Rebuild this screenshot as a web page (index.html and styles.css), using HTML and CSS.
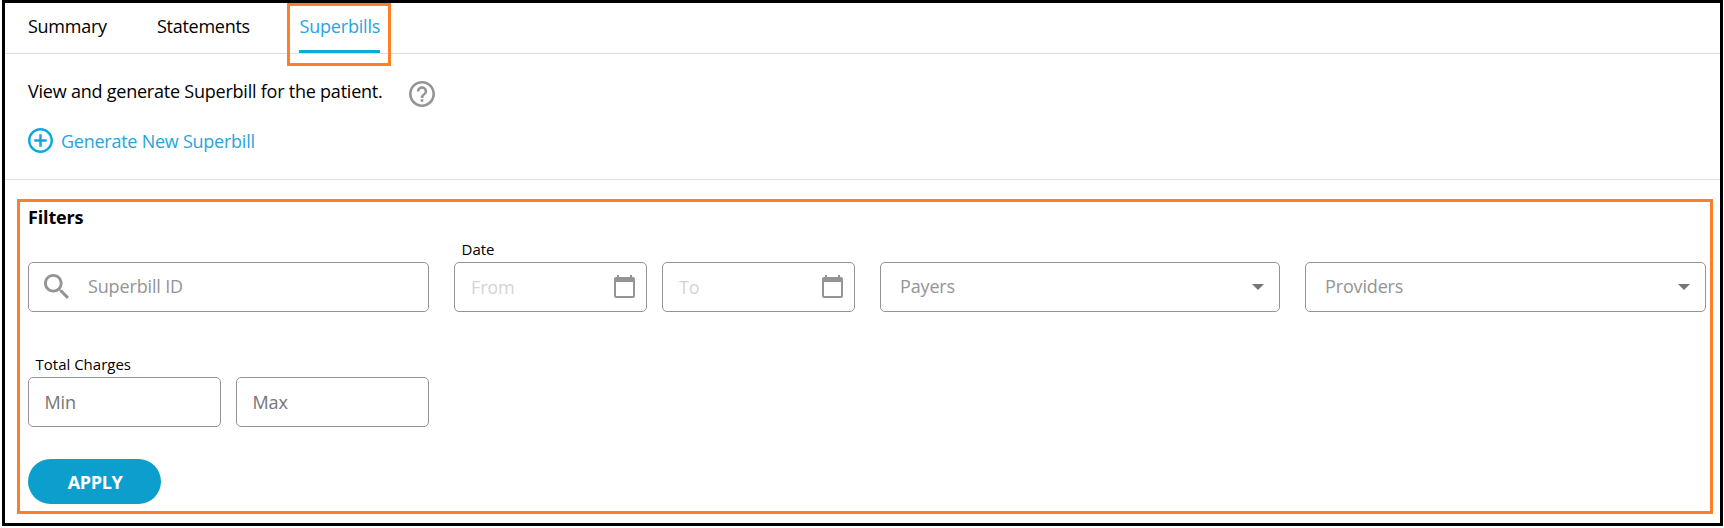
FILE: index.html
```html
<!DOCTYPE html>
<html lang="en">
<head>
<meta charset="utf-8">
<title>Superbills</title>
<link rel="stylesheet" href="styles.css">
</head>
<body>
<main class="frame">
  <nav class="tabs">
    <a class="tab">Summary</a>
    <a class="tab">Statements</a>
    <a class="tab tab-active"><span class="tab-label">Superbills</span></a>
  </nav>
  <section class="intro">
    <div class="intro-row">
      <span class="intro-text">View and generate Superbill for the patient.</span>
      <svg class="help" viewBox="2 2 20 20"><path d="M11 18h2v-2h-2v2zm1-16C6.48 2 2 6.48 2 12s4.480 10 10 10 10-4.480 10-10S17.520 2 12 2zm0 18c-4.410 0-8-3.590-8-8s3.590-8 8-8 8 3.590 8 8-3.590 8-8 8zm0-14c-2.210 0-4 1.790-4 4h2c0-1.100.9-2 2-2s2 .9 2 2c0 2-3 1.750-3 5h2c0-2.250 3-2.500 3-5 0-2.210-1.790-4-4-4z"/></svg>
    </div>
    <a class="generate">
      <svg class="plus" viewBox="2 2 20 20"><path d="M13 7h-2v4H7v2h4v4h2v-4h4v-2h-4V7zm-1-5C6.480 2 2 6.480 2 12s4.480 10 10 10 10-4.480 10-10S17.520 2 12 2zm0 18c-4.410 0-8-3.590-8-8s3.590-8 8-8 8 3.590 8 8-3.590 8-8 8z"/></svg>
      <span class="generate-text">Generate New Superbill</span>
    </a>
  </section>
  <section class="filters">
    <h2 class="title">Filters</h2>
    <div class="grid">
      <div class="cell">
        <div class="label"></div>
        <div class="field search">
          <svg class="search-icon" viewBox="3 3 17.490 17.490"><path d="M15.500 14h-.79l-.28-.27C15.410 12.590 16 11.110 16 9.500 16 5.910 13.090 3 9.500 3S3 5.910 3 9.500 5.910 16 9.500 16c1.610 0 3.090-.59 4.230-1.570l.27.28v.79l5 4.990L20.490 19l-4.990-5zm-6 0C7.010 14 5 11.990 5 9.500S7.010 5 9.500 5 14 7.010 14 9.500 11.990 14 9.500 14z"/></svg>
          <span class="hint">Superbill ID</span>
        </div>
      </div>
      <div class="cell">
        <div class="label">Date</div>
        <div class="pair">
          <div class="field date"><span class="hint faint">From</span>
            <svg class="cal" viewBox="0 0 21 23"><path d="M3 0h2v2h11V0h2v2h1a2 2 0 0 1 2 2v17a2 2 0 0 1-2 2H2a2 2 0 0 1-2-2V4a2 2 0 0 1 2-2h1zM2 7v14h17V7z"/></svg></div>
          <div class="field date"><span class="hint faint">To</span>
            <svg class="cal" viewBox="0 0 21 23"><path d="M3 0h2v2h11V0h2v2h1a2 2 0 0 1 2 2v17a2 2 0 0 1-2 2H2a2 2 0 0 1-2-2V4a2 2 0 0 1 2-2h1zM2 7v14h17V7z"/></svg></div>
        </div>
      </div>
      <div class="cell">
        <div class="label"></div>
        <div class="field select"><span class="hint">Payers</span><svg class="arrow" viewBox="0 0 12 6"><path d="M0 0h12L6 6z"/></svg></div>
      </div>
      <div class="cell">
        <div class="label"></div>
        <div class="field select"><span class="hint">Providers</span><svg class="arrow" viewBox="0 0 12 6"><path d="M0 0h12L6 6z"/></svg></div>
      </div>
      <div class="cell">
        <div class="label">Total Charges</div>
        <div class="pair">
          <div class="field amount"><span class="hint dark">Min</span></div>
          <div class="field amount"><span class="hint dark">Max</span></div>
        </div>
      </div>
    </div>
    <button class="apply">APPLY</button>
  </section>
</main>
</body>
</html>
```
FILE: styles.css
```css
* { box-sizing: border-box; }
body {
  margin: 0;
  height: 528px;
  background: #fff;
  color: #000;
  font: 18px/24px "Open Sans", sans-serif;
}
svg { display: block; flex: none; fill: #949494; }
.frame {
  width: 1721px;
  height: 526px;
  margin-left: 2px;
  border: 3px solid #000;
}
.tabs {
  display: flex;
  height: 51px;
  padding-left: 23px;
  border-bottom: 1px solid #dedede;
}
.tab { width: 129px; padding-top: 11px; letter-spacing: -0.27px; }
.tab:nth-child(2) { width: 130px; }
.tab-active {
  width: 104px;
  height: 63px;
  padding: 8px 8px 0 9px;
  border: 3px solid #ff7f27;
  color: #29a3dc;
  letter-spacing: -0.2px;
}
.tab-label {
  display: block;
  width: 81px;
  height: 39px;
  padding-left: 0.5px;
  border-bottom: 3px solid #0ca9dd;
}
.intro {
  height: 126px;
  padding: 22px 23px 0;
  border-bottom: 1px solid #dedede;
}
.intro-row { display: flex; height: 52px; }
.intro-text { width: 381px; padding-top: 3px; white-space: nowrap; letter-spacing: -0.225px; }
.help { width: 26px; height: 26px; margin-top: 5px; }
.generate { display: flex; align-items: center; color: #29a3dc; letter-spacing: -0.25px; }
.plus { width: 25px; height: 25px; margin-right: 8px; fill: #0ca9dd; }
.filters {
  width: 1696px;
  height: 315px;
  margin: 19px 0 0 12px;
  padding: 3px 4px 0 8px;
  border: 3px solid #ff7f27;
}
.title { margin: 0; font-size: 18px; line-height: 24px; font-weight: 700; letter-spacing: -0.15px; }
.grid {
  display: grid;
  grid-template-columns: 401px 401px 400px 401px;
  column-gap: 25px;
  row-gap: 42px;
  margin-top: 10px;
}
.label { height: 23px; padding-left: 7.5px; font-size: 15px; line-height: 20px; }
.pair { display: flex; gap: 15px; }
.field {
  display: flex;
  align-items: center;
  height: 50px;
  border: 1px solid #949494;
  border-radius: 5px;
}
.hint { color: #949494; letter-spacing: -0.15px; }
.search .hint, .select .hint { padding-bottom: 2px; }
.faint { color: #d4d4d4; }
.dark { color: #757575; }
.search { padding-left: 15px; }
.search-icon { width: 25px; height: 25px; margin: -1px 19px 0 0; }
.date, .amount { width: 193px; }
.date { justify-content: space-between; padding: 0 11px 0 16px; }
.amount { padding-left: 15.5px; }
.cal { width: 21px; height: 23px; margin-top: -1px; }
.select { justify-content: space-between; padding: 0 15px 0 19px; }
.arrow { width: 12px; height: 6px; fill: #757575; }
.apply {
  display: block;
  width: 133px;
  height: 45px;
  margin-top: 32px;
  padding: 0 0 0 1px;
  border: 0;
  border-radius: 23px;
  background: #0c9fcd;
  color: #fff;
  font: 700 18px/24px "Open Sans", sans-serif;
  letter-spacing: -0.35px;
}
```
